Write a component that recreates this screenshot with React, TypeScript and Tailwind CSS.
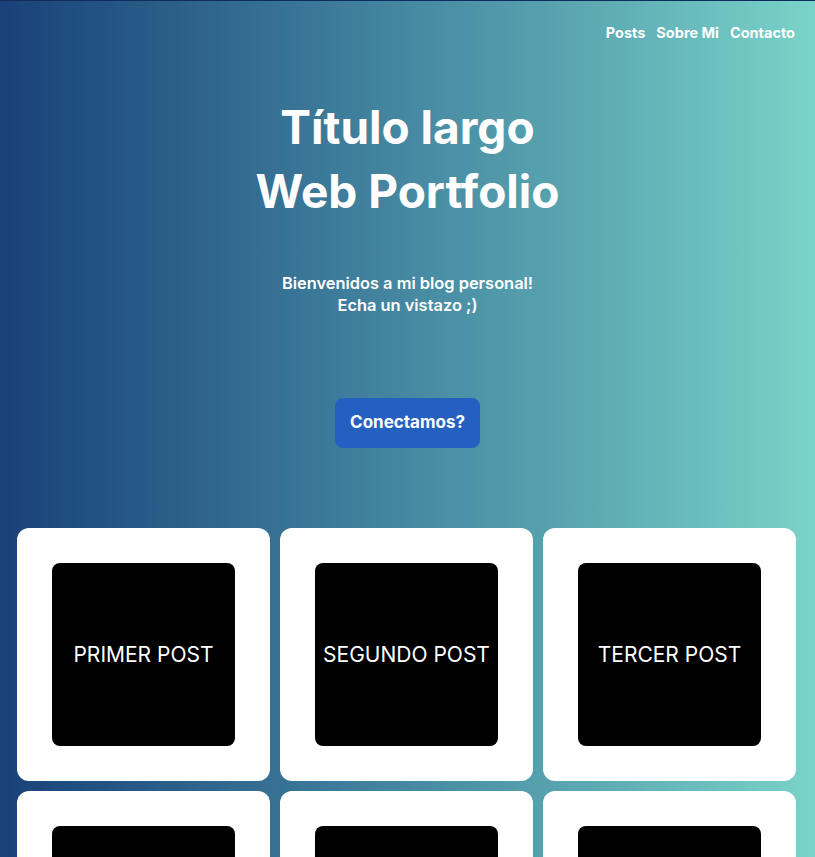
import React from "react";

const posts = [
  "Primer post",
  "Segundo post",
  "Tercer post",
  "Cuarto post",
  "Quinto post",
  "Sexto post",
];

export default function App() {
  return (
    <div
      className="min-h-screen border-t border-[#0f2d5c] bg-gradient-to-r from-[#1a4178] to-[#7ad3c8] text-white"
      style={{ fontFamily: "Inter, 'Noto Sans', sans-serif" }}
    >
      {/* Nav */}
      <nav className="flex justify-end gap-[11px] pr-5 pt-[21px] text-[14.5px] font-bold">
        <a href="#">Posts</a>
        <a href="#">Sobre Mi</a>
        <a href="#">Contacto</a>
      </nav>

      {/* Hero */}
      <header className="flex flex-col items-center text-center">
        <h1 className="mt-[51px] text-[46px] font-bold leading-[64px]">
          Título largo
          <br />
          Web Portfolio
        </h1>
        <p className="mt-[49px] text-[16.4px] font-semibold leading-[22px]">
          Bienvenidos a mi blog personal!
          <br />
          Echa un vistazo ;)
        </p>
        <button className="mt-[82px] h-[50px] w-[145px] rounded-lg bg-[#2360c0] text-[17px] font-bold">
          Conectamos?
        </button>
      </header>

      {/* Posts grid */}
      <section className="mt-20 grid grid-cols-3 gap-[10px] pb-4 pl-[17px] pr-[19px]">
        {posts.map((post) => (
          <div
            key={post}
            className="flex aspect-square items-center justify-center rounded-xl bg-white p-[35px]"
          >
            <div className="flex h-full w-full items-center justify-center rounded-lg bg-black text-[21px] uppercase">
              {post}
            </div>
          </div>
        ))}
      </section>
    </div>
  );
}
